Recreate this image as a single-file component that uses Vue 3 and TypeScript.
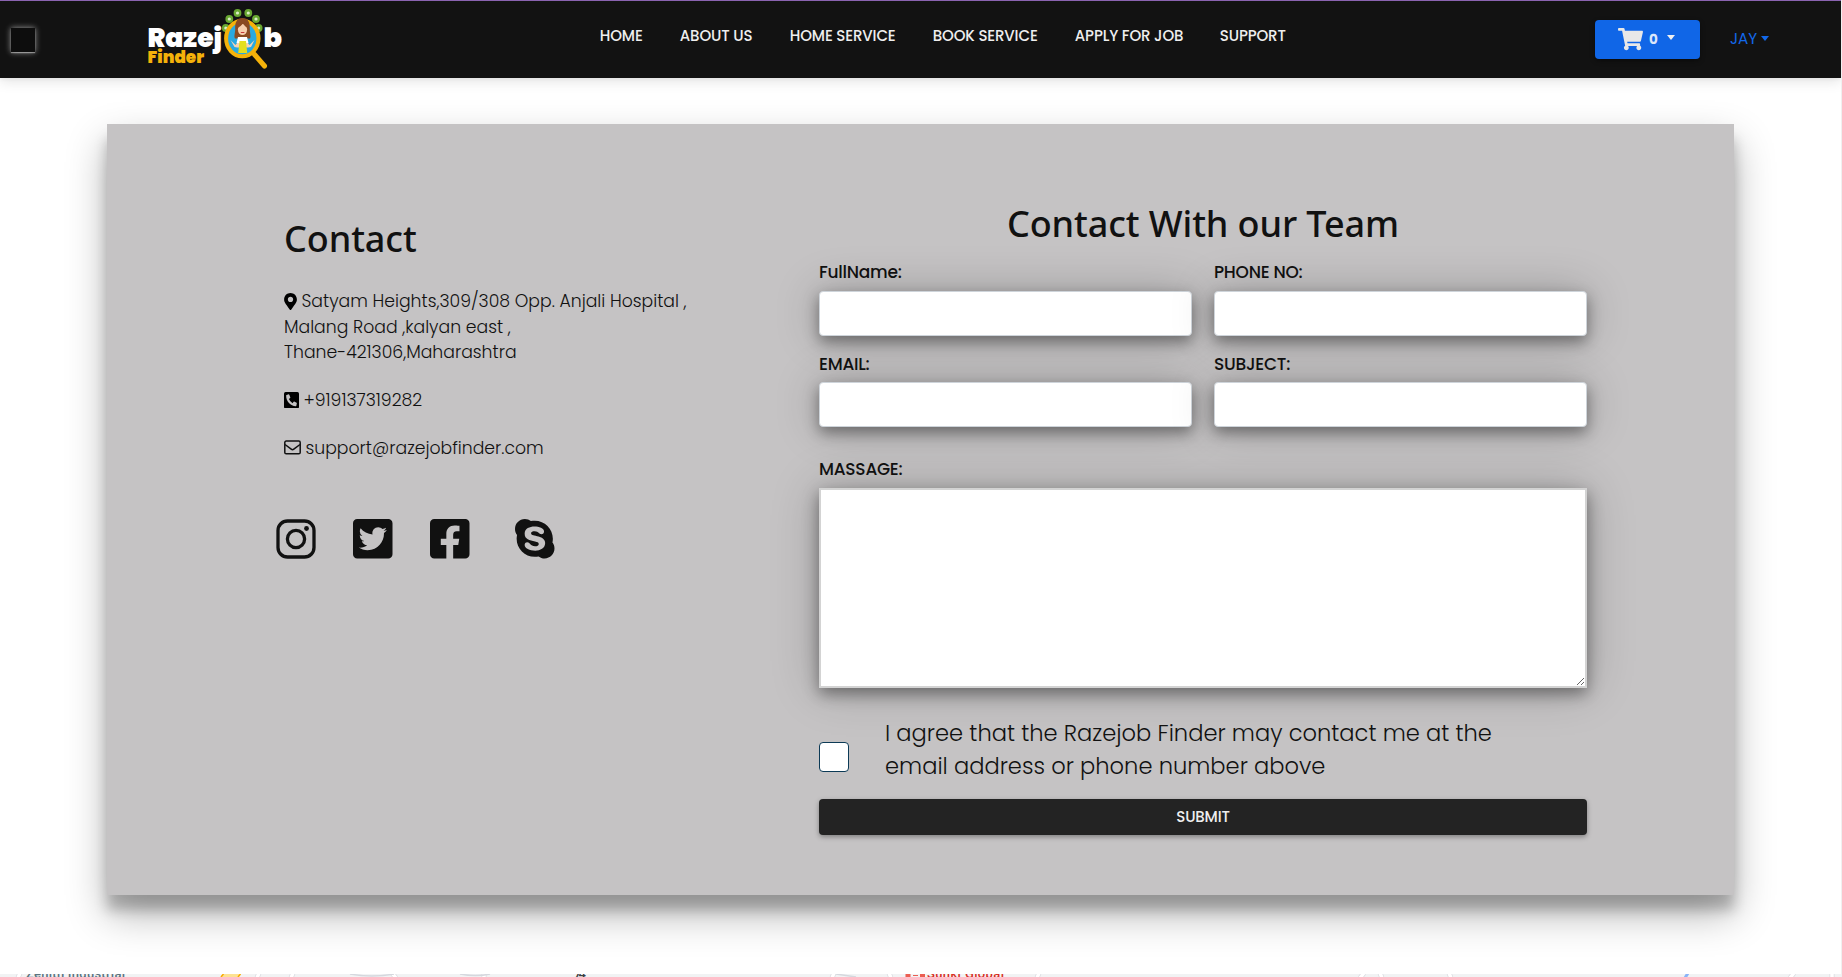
<script setup lang="ts">
import { ref } from 'vue'

interface Field { key: string; text: string }

const nav = ['HOME', 'ABOUT US', 'HOME SERVICE', 'BOOK SERVICE', 'APPLY FOR JOB', 'SUPPORT']

const rows: Field[][] = [
  [
    { key: 'name', text: 'FullName:' },
    { key: 'phone', text: 'PHONE NO:' },
  ],
  [
    { key: 'email', text: 'EMAIL:' },
    { key: 'subject', text: 'SUBJECT:' },
  ],
]

const form = ref<Record<string, string>>({ name: '', phone: '', email: '', subject: '', message: '' })
const agreed = ref(false)

const social = [
  { name: 'twitter', d: 'M400 32H48C21.5 32 0 53.5 0 80v352c0 26.5 21.5 48 48 48h352c26.5 0 48-21.5 48-48V80c0-26.5-21.5-48-48-48zm-48.9 158.8c.2 2.8.2 5.7.2 8.5 0 86.7-66 186.6-186.6 186.6-37.2 0-71.7-10.8-100.7-29.4 5.3.6 10.4.8 15.8.8 30.7 0 58.9-10.4 81.4-28-28.8-.6-53-19.5-61.3-45.5 10.1 1.5 19.2 1.5 29.6-1.2-30-6.1-52.5-32.5-52.5-64.4v-.8c8.7 4.9 18.9 7.9 29.6 8.3a65.447 65.447 0 0 1-29.2-54.6c0-12.2 3.2-23.4 8.9-33.1 32.3 39.8 80.8 65.8 135.2 68.6-9.3-44.5 24-80.6 64-80.6 18.9 0 35.9 7.9 47.9 20.7 14.8-2.8 29-8.3 41.6-15.8-4.9 15.2-15.2 28-28.8 36.1 13.2-1.4 26-5.1 37.8-10.2-8.9 13.1-20.1 24.7-32.9 34z' },
  { name: 'facebook', d: 'M400 32H48A48 48 0 0 0 0 80v352a48 48 0 0 0 48 48h137.25V327.69h-63V256h63v-54.64c0-62.15 37-96.48 93.67-96.48 27.14 0 55.52 4.84 55.52 4.84v61h-31.27c-30.81 0-40.42 19.12-40.42 38.73V256h68.78l-11 71.69h-57.78V480H400a48 48 0 0 0 48-48V80a48 48 0 0 0-48-48z' },
  { name: 'skype', d: 'M424.7 299.8c2.9-14 4.7-28.9 4.7-43.8 0-113.5-91.9-205.3-205.3-205.3-14.9 0-29.7 1.7-43.8 4.7C161.3 40.7 137.7 32 112 32 50.2 32 0 82.2 0 144c0 25.7 8.7 49.3 23.3 68.2-2.9 14-4.7 28.9-4.7 43.8 0 113.5 91.9 205.3 205.3 205.3 14.9 0 29.7-1.7 43.8-4.7 19 14.6 42.6 23.3 68.2 23.3 61.8 0 112-50.2 112-112 .1-25.6-8.6-49.2-23.2-68.1zm-194.6 91.5c-65.6 0-120.5-29.2-120.5-65 0-16 9-30.6 29.5-30.6 31.2 0 34.1 44.9 88.1 44.9 25.7 0 42.3-11.4 42.3-26.3 0-18.7-16-21.6-42-28-62.5-15.4-117.8-22-117.8-87.2 0-59.2 58.6-81.1 109.1-81.1 55.1 0 110.8 21.9 110.8 55.4 0 16.9-11.4 31.8-30.3 31.8-28.3 0-29.2-33.5-75-33.5-25.7 0-42 7-42 22.5 0 19.8 20.8 21.8 69.1 33 41.4 9.3 90.7 26.8 90.7 77.6 0 59.1-57.1 86.5-112 86.5z' },
]

const bubbles: [number, number][] = [[225.8, 28], [229.3, 19], [237.5, 13], [248.3, 13], [256, 19], [258.6, 28]]
const roads: [number, number][] = [[258, 1], [292, 1], [19, 1], [484, 0], [394, -2], [833, 1], [890, -1], [1038, 1], [1362, 2], [1381, -1], [1450, -1], [1792, 2], [1832, 0]]
</script>

<template>
  <div class="page">
    <header class="bar">
      <button class="toggle" type="button" aria-label="Menu"></button>

      <svg class="logo" viewBox="144 6 142 66" width="142" height="66">
        <text x="147.500" y="47" class="word" textLength="74.500" lengthAdjust="spacingAndGlyphs">Razej</text>
        <text x="263.5" y="47" class="word" textLength="18.5" lengthAdjust="spacingAndGlyphs">b</text>
        <text x="147.600" y="63" class="sub" textLength="56.500" lengthAdjust="spacingAndGlyphs">Finder</text>
        <g v-for="([x, y], i) in bubbles" :key="i">
          <circle :cx="x" :cy="y" r="3.900" fill="#69a832" />
          <circle :cx="x" :cy="y" r="1.600" fill="#d9edc4" />
        </g>
        <path d="M254.500 54.500L264.500 66" stroke="#f5b20a" stroke-width="5" stroke-linecap="round" />
        <ellipse cx="242.300" cy="38.500" rx="16.200" ry="17.800" fill="#29a9e1" stroke="#f5b20a" stroke-width="4" />
        <path d="M242.500 18c-6 0-7.500 5-7.300 10 .2 5-1.600 8-.2 10.500h15c1.400-2.500-.4-5.500-.2-10.500.2-5-1.300-10-7.300-10z" fill="#8a4a22" />
        <path d="M230.500 40l5 5 4-5h6l4 5 5-5-3.500 7-3 .5h-11l-2.500-.5z" fill="#f6d3b3" />
        <path d="M238 37h9l1.500 6h-12z" fill="#fff" />
        <ellipse cx="242.500" cy="29.500" rx="4.600" ry="5.600" fill="#f7cfae" />
        <path d="M237.500 28c2-1 4.500-3 5.500-5 1 2 2.500 4 4.500 5-.5-4-2-6-5-6s-4.500 2-5 6z" fill="#8a4a22" />
        <path d="M240.800 32.500h3.600" stroke="#c2373a" stroke-width="1" />
        <path d="M239.500 41h6.500l1.200 12h-9z" fill="#e3df1e" />
      </svg>

      <nav class="nav">
        <a v-for="n in nav" :key="n">{{ n }}</a>
      </nav>

      <button class="cart" type="button">
        <svg viewBox="0 0 576 512" width="25" height="22.200"><path fill="#e8e8e8" d="M528.12 301.319l47.273-208C578.806 78.301 567.391 64 551.99 64H159.208l-9.166-44.81C147.758 8.021 137.93 0 126.529 0H24C10.745 0 0 10.745 0 24v16c0 13.255 10.745 24 24 24h69.883l70.248 343.435C147.325 417.1 136 435.222 136 456c0 30.928 25.072 56 56 56s56-25.072 56-56c0-15.674-6.447-29.835-16.824-40h209.647C430.447 426.165 424 440.326 424 456c0 30.928 25.072 56 56 56s56-25.072 56-56c0-22.172-12.888-41.332-31.579-50.405l5.517-24.276c3.413-15.018-8.002-29.319-23.403-29.319H218.117l-6.545-32h293.145c11.206 0 20.92-7.754 23.403-18.681z" /></svg>
        <b>0</b>
        <i class="caret"></i>
      </button>

      <a class="user">JAY<i class="caret"></i></a>
    </header>

    <main class="card">
      <section class="info">
        <h2>Contact</h2>
        <p>
          <svg class="pin" viewBox="0 0 384 512" width="13" height="17"><path d="M172.268 501.67C26.97 291.031 0 269.413 0 192 0 85.961 85.961 0 192 0s192 85.961 192 192c0 77.413-26.97 99.031-172.268 309.67-9.535 13.774-29.93 13.773-39.464 0zM192 272c44.183 0 80-35.817 80-80s-35.817-80-80-80-80 35.817-80 80 35.817 80 80 80z" /></svg>Satyam Heights,309/308 Opp. Anjali Hospital ,<br />Malang Road ,kalyan east ,<br />Thane-421306,Maharashtra
        </p>
        <p>
          <svg class="phone" viewBox="0 32 448 448" width="15" height="16.500" preserveAspectRatio="none"><path d="M400 32H48A48 48 0 0 0 0 80v352a48 48 0 0 0 48 48h352a48 48 0 0 0 48-48V80a48 48 0 0 0-48-48zm-16.39 307.37l-15 65A15 15 0 0 1 354 416C194 416 64 286.29 64 126a15.7 15.7 0 0 1 11.63-14.61l65-15A18.23 18.23 0 0 1 144 96a16.27 16.27 0 0 1 13.79 9.09l30 70A17.9 17.9 0 0 1 189 181a17 17 0 0 1-5.5 11.61l-37.89 31a231.91 231.91 0 0 0 110.78 110.78l31-37.89A17 17 0 0 1 299 291a17.85 17.85 0 0 1 5.91 1.21l70 30A16.25 16.25 0 0 1 384 336a17.41 17.41 0 0 1-.39 3.37z" /></svg>+919137319282
        </p>
        <p>
          <svg class="mail" viewBox="0 0 17 15" width="17" height="15" fill="none" stroke="#111" stroke-width="1.500"><rect x=".8" y="1" width="15.400" height="12.800" rx="1.400" /><path d="M1 4.500l6.200 4.700a2.100 2.100 0 0 0 2.600 0L16 4.500" /></svg>support@razejobfinder.com
        </p>

        <div class="social">
          <svg viewBox="0 0 40 40" width="40" height="40" fill="none" stroke="#111" stroke-width="3.300"><rect x="2" y="2" width="36" height="36" rx="9.500" /><circle cx="20" cy="20" r="8.600" /><circle cx="30.500" cy="9.500" r="2.400" fill="#111" stroke="none" /></svg>
          <svg v-for="s in social" :key="s.name" :class="s.name" viewBox="0 32 448 448" width="39.500" height="39.500"><path :d="s.d" /></svg>
        </div>
      </section>

      <form class="form" @submit.prevent>
        <h2>Contact With our Team</h2>
        <div v-for="(row, r) in rows" :key="r" class="row">
          <label v-for="f in row" :key="f.key">
            {{ f.text }}
            <input v-model="form[f.key]" type="text" />
          </label>
        </div>
        <label class="message">
          MASSAGE:
          <textarea v-model="form.message"></textarea>
        </label>
        <div class="agree">
          <input v-model="agreed" type="checkbox" />
          <p>I agree that the Razejob Finder may contact me at the<br />email address or phone number above</p>
        </div>
        <button class="submit" type="submit">SUBMIT</button>
      </form>
    </main>

    <div class="map">
      <svg width="1841" height="3" viewBox="0 0 1841 3">
        <path v-for="([x, k], i) in roads" :key="i" :d="`M${x + k} -1L${x - k} 4`" stroke="#d9dce0" stroke-width="5" />
        <path v-for="([x, k], i) in roads" :key="'w' + i" :d="`M${x + k} -1L${x - k} 4`" stroke="#fff" stroke-width="3.500" />
        <path d="M350 0q22 4 44 0M460 0q16 3 30 0M836 0l20 3" stroke="#d5d8de" stroke-width="1.500" fill="none" />
        <path d="M223 0h18l-3 3h-17z" fill="#fde293" />
        <path d="M223.500 0l-2.500 3M240.500 0l-2.500 3" stroke="#f9ab00" stroke-width="1.500" />
        <path d="M905.500 0h5v3h-5zM913 1h5v1h-5zM920 0h5v3h-5z" fill="#ea4335" opacity=".85" />
        <path d="M1688 -1l-3 5" stroke="#8ab4f8" stroke-width="3" />
        <text x="26" y="3.600" class="place" textLength="99">Zenith Industrial</text>
        <text x="574" y="3.600" class="place dark" textLength="12">74</text>
        <text x="927" y="3.600" class="place red" textLength="77">Sunki Global</text>
      </svg>
    </div>
  </div>
</template>

<style>
body {
  margin: 0;
  overflow: hidden;
  background: #fff;
}
</style>

<style scoped>
* {
  box-sizing: border-box;
}
.page {
  width: 1842px;
  height: 977px;
  display: flex;
  flex-direction: column;
  overflow: hidden;
  border-right: 1px solid #f0f0f0;
  background: #fff;
  color: #111;
  font-family: Poppins, Inter, 'Open Sans', sans-serif;
}
.bar {
  flex: none;
  height: 78px;
  display: flex;
  align-items: flex-start;
  background: #121212;
  border-top: 1px solid #8a63b0;
  box-shadow: 0 4px 12px rgba(0, 0, 0, 0.1), 0 2px 4px rgba(0, 0, 0, 0.03);
}
button {
  border: 0;
  padding: 0;
  font-family: inherit;
}
.toggle {
  width: 24px;
  height: 24px;
  margin: 27px 0 0 11px;
  background: #0d0d0d;
  box-shadow: 0 1px 1px rgba(255, 255, 255, 0.4), 0 0 6px rgba(255, 255, 255, 0.6);
}
.logo {
  display: block;
  margin: 5px 0 0 109px;
}
.word,
.sub {
  font-family: Poppins, Inter, sans-serif;
  font-weight: 900;
}
.word {
  font-size: 26.5px;
  fill: #fff;
}
.sub {
  font-size: 16.5px;
  fill: #f5b20a;
}
.nav {
  width: 700px;
  margin: 23px 0 0 313.8px;
  display: grid;
  grid-template-columns: 80px 110px 143px 142px 145px 80px;
  font-size: 15px;
  font-weight: 500;
  line-height: 24px;
  letter-spacing: -0.15px;
  color: #eee;
  white-space: nowrap;
}
.cart {
  width: 105px;
  height: 39px;
  margin: 19px 0 0 295.2px;
  padding-left: 23px;
  display: flex;
  align-items: center;
  border-radius: 4px;
  background: #1066e7;
  color: #dbe6fa;
  box-shadow: 0 2px 5px rgba(0, 0, 0, 0.4);
}
.cart b {
  margin-left: 6px;
  width: 18.5px;
  font-size: 13.5px;
  font-weight: 700;
  text-align: left;
}
.caret {
  display: inline-block;
  border: 4.900px solid transparent;
  border-top-color: currentColor;
  border-width: 5px 4.5px 0;
}
.cart .caret {
  margin-bottom: 5px;
  color: #f0f0f0;
}
.user {
  margin: 26px 0 0 30px;
  font-size: 15.2px;
  line-height: 24px;
  color: #1268ea;
}
.user .caret {
  margin-left: 3.500px;
  vertical-align: 3.500px;
}
.card {
  flex: none;
  width: 1627px;
  height: 771px;
  margin: 46px 0 0 107px;
  display: flex;
  background: #c5c3c4;
  box-shadow: 0 19px 38px rgba(0, 0, 0, 0.3), 0 15px 12px rgba(0, 0, 0, 0.22);
}
h2 {
  margin: 0;
  font: 500 36px/48px 'Segoe UI', 'Noto Sans', sans-serif;
  letter-spacing: -0.1px;
}
.info {
  width: 535px;
  margin-left: 177px;
  padding-top: 91px;
}
.info h2 {
  margin-bottom: 26px;
}
.info p {
  margin: 0 0 22.5px;
  font-size: 17.25px;
  line-height: 25.5px;
  font-weight: 300;
}
.info p svg {
  display: inline-block;
}
.pin {
  margin-right: 4.5px;
  vertical-align: -2.5px;
}
.phone {
  margin-right: 4.5px;
  vertical-align: -2px;
}
.mail {
  margin-right: 4.5px;
  vertical-align: -1px;
}
.social {
  margin: 57.500px 0 0 -8px;
  display: flex;
  fill: #111;
}
.social .twitter,
.social .facebook {
  margin-left: 37.4px;
}
.social .skype {
  margin-left: 45.3px;
}
.form {
  width: 768px;
  padding-top: 76px;
}
.form h2 {
  margin-bottom: 12px;
  text-align: center;
}
.row {
  display: grid;
  grid-template-columns: 373px 373px;
  column-gap: 22px;
  margin-bottom: 15.5px;
}
.row label,
.message {
  display: flex;
  flex-direction: column;
  gap: 7px;
  font-size: 17px;
  line-height: 24px;
  letter-spacing: -0.25px;
  font-weight: 500;
}
.row + .row label {
  gap: 6px;
}
.row input,
textarea {
  margin: 0;
  outline: none;
  background: #fff;
  box-shadow: 0 0 45px rgba(0, 0, 0, 0.22), 0 6px 15px rgba(0, 0, 0, 0.4);
}
.row input {
  width: 373px;
  height: 45px;
  padding: 8px 12px;
  border: 1px solid #ced4da;
  border-radius: 4px;
}
.message {
  margin-top: 30px;
}
textarea {
  width: 768px;
  height: 200px;
  border: 2px solid #d3d3d3;
  resize: vertical;
}
.agree {
  margin-top: 28px;
  height: 66px;
  display: flex;
}
.agree input {
  appearance: none;
  width: 30px;
  height: 30px;
  margin: 26px 36px 0 0;
  border: 1px solid #0c3a56;
  border-radius: 4px;
  background: #fff;
}
.agree p {
  margin: 1px 0 0;
  font-size: 22.6px;
  line-height: 33px;
  font-weight: 300;
  white-space: nowrap;
}
.submit {
  display: block;
  width: 768px;
  height: 36px;
  margin-top: 17px;
  border-radius: 4px;
  background: #232323;
  color: #eee;
  font-size: 15px;
  font-weight: 500;
  letter-spacing: -0.2px;
  box-shadow: 0 2px 5px rgba(0, 0, 0, 0.35);
}
.map {
  flex: none;
  height: 3px;
  margin-top: 79px;
  overflow: hidden;
  background: #f1f3f4;
}
.map svg {
  display: block;
}
.place {
  font-family: Roboto, sans-serif;
  font-size: 13px;
  font-weight: 500;
  fill: #5b7480;
}
.place.dark {
  fill: #3c4043;
}
.place.red {
  fill: #d93025;
}
</style>
